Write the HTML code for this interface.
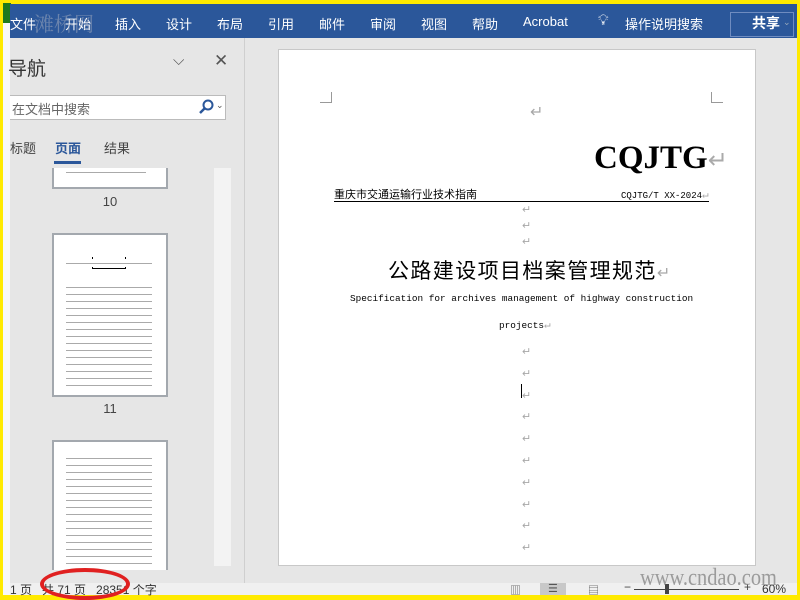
<!DOCTYPE html>
<html><head><meta charset="utf-8"><style>
*{margin:0;padding:0;box-sizing:border-box}
body{width:800px;height:600px;overflow:hidden;background:#ffea00;position:relative;font-family:"Liberation Sans","Noto Sans CJK SC",sans-serif}
.a{position:absolute}
.rib{left:10px;top:4px;width:787px;height:34px;background:#2b579a;color:#fff;font-size:13px}
.rib span{position:absolute;top:10px}
.nav{left:10px;top:38px;width:234px;height:545px;background:#e6e6e6}
.main{left:244px;top:38px;width:553px;height:545px;background:#e6e6e6;border-left:1px solid #cfcfcf}
.page{left:278px;top:49px;width:478px;height:517px;background:#fff;border:1px solid #c8c8c8}
.ret{color:#a8a8a8;font-size:11px}
.thumb{background:#fff;border:2px solid #a3a8ae;left:52px;width:116px}
.lines{position:absolute;left:12px;right:14px;background:repeating-linear-gradient(#fff 0 4px,#aaa 4px 5px,#fff 5px 7px)}
.num{font-size:13px;color:#444;width:116px;text-align:center;left:52px}
.status{left:10px;top:583px;width:787px;height:12px;background:#f0f0f0;font-size:12px;color:#333}
</style></head><body>
<div class="a" style="left:3px;top:3px;width:7px;height:592px;background:#f8f8f8"></div>
<div class="a" style="left:3px;top:3px;width:8px;height:20px;background:#1e7a1e"></div>
<div class="a rib">
<span style="left:0">文件</span><span style="left:55px">开始</span><span style="left:105px">插入</span><span style="left:156px">设计</span><span style="left:207px">布局</span><span style="left:258px">引用</span><span style="left:309px">邮件</span><span style="left:360px">审阅</span><span style="left:411px">视图</span><span style="left:462px">帮助</span><span style="left:513px">Acrobat</span>
<span style="left:588px;top:8px;font-size:15px">💡︎</span><span style="left:615px">操作说明搜索</span>
<div class="a" style="left:720px;top:8px;width:64px;height:25px;border:1px solid #6f8cc0"></div>
<span style="left:742px;font-weight:bold;font-size:14px;top:9px">共享</span><span style="left:773px;font-size:9px;top:13px;color:#9ab">⌄</span>
<span style="left:24px;top:4px;font-size:20px;color:rgba(160,170,190,.55);font-family:'Noto Serif CJK SC',serif">滩桥网</span>
</div>
<div class="a nav">
<div class="a" style="left:-2px;top:16px;font-size:19px;color:#333">导航</div>
<div class="a" style="left:163px;top:14px;font-size:15px;color:#555">⌵</div>
<div class="a" style="left:204px;top:13px;font-size:17px;color:#555">✕</div>
<div class="a" style="left:0;top:57px;width:216px;height:25px;background:#fff;border:1px solid #bbb;border-left:none"></div>
<div class="a" style="left:2px;top:61px;font-size:13px;color:#666">在文档中搜索</div>
<svg class="a" style="left:188px;top:61px" width="16" height="16"><circle cx="10" cy="6" r="4.5" fill="none" stroke="#2b579a" stroke-width="2"/><line x1="7" y1="9" x2="2" y2="14" stroke="#2b579a" stroke-width="2.5"/></svg>
<div class="a" style="left:206px;top:62px;font-size:9px;color:#555">⌄</div>
<div class="a" style="left:0;top:100px;font-size:13px;color:#444">标题</div>
<div class="a" style="left:45px;top:100px;font-size:13px;color:#2b579a;font-weight:bold">页面</div>
<div class="a" style="left:44px;top:123px;width:27px;height:3px;background:#2b579a"></div>
<div class="a" style="left:94px;top:100px;font-size:13px;color:#444">结果</div>
<div class="a" style="left:204px;top:130px;width:17px;height:398px;background:#f3f3f3"></div>
</div>
<div class="a thumb" style="top:168px;height:21px;border-top:none"><div class="lines" style="top:0;height:8px;right:20px"></div></div>
<div class="a num" style="top:194px">10</div>
<div class="a thumb" style="top:233px;height:164px">
<div class="a" style="left:38px;top:22px;width:34px;height:12px;border:1px solid #000;border-top:none"></div>
<div class="a" style="left:38px;top:28px;width:34px;height:1px;background:#000"></div>
<div class="lines" style="top:24px;height:8px"></div>
<div class="lines" style="top:48px;height:104px"></div></div>
<div class="a num" style="top:401px">11</div>
<div class="a thumb" style="top:440px;height:130px;border-bottom:none"><div class="lines" style="top:12px;height:112px"></div></div>
<div class="a main"></div>
<div class="a page"></div>
<div class="a" style="left:320px;top:92px;width:12px;height:11px;border-right:1px solid #999;border-bottom:1px solid #999"></div>
<div class="a" style="left:711px;top:92px;width:12px;height:11px;border-left:1px solid #999;border-bottom:1px solid #999"></div>
<div class="a ret" style="left:530px;top:102px;font-size:16px">↵</div>
<div class="a" style="left:594px;top:140px;font-family:'Liberation Serif',serif;font-weight:bold;font-size:33px;color:#000">CQJTG<span style="color:#aaa;font-weight:normal;font-size:24px">↵</span></div>
<div class="a" style="left:334px;top:186px;font-size:11px;color:#000">重庆市交通运输行业技术指南</div>
<div class="a" style="left:621px;top:188px;font-size:9px;font-family:'Liberation Mono',monospace;color:#000">CQJTG/T XX-2024<span class="ret">↵</span></div>
<div class="a" style="left:334px;top:201px;width:375px;height:1px;background:#000"></div>
<div class="a ret" style="left:522px;top:203px">↵</div>
<div class="a ret" style="left:522px;top:219px">↵</div>
<div class="a ret" style="left:522px;top:235px">↵</div>
<div class="a" style="left:388px;top:255px;font-size:21px;letter-spacing:1.4px;color:#000">公路建设项目档案管理规范<span class="ret" style="font-size:16px">↵</span></div>
<div class="a" style="left:350px;top:293px;font-size:9.4px;font-family:'Liberation Mono',monospace;color:#000">Specification for archives management of highway construction</div>
<div class="a" style="left:499px;top:318px;font-size:9.4px;font-family:'Liberation Mono',monospace;color:#000">projects<span class="ret">↵</span></div>
<div class="a ret" style="left:522px;top:342px;line-height:21.8px">↵<br>↵<br>↵<br>↵<br>↵<br>↵<br>↵<br>↵<br>↵<br>↵</div>
<div class="a" style="left:521px;top:384px;width:1px;height:14px;background:#000"></div>
<div class="a status">
<div class="a" style="left:0;top:-2px">1 页 &nbsp; 共 71 页 &nbsp; 28351 个字</div>
<div class="a" style="left:530px;top:0;width:26px;height:12px;background:#c8c8c8"></div>
<div class="a" style="left:500px;top:-1px;font-size:11px;color:#555">▥</div>
<div class="a" style="left:538px;top:-1px;font-size:11px;color:#555">☰</div>
<div class="a" style="left:578px;top:-1px;font-size:11px;color:#555">▤</div>
<div class="a" style="left:614px;top:-3px;color:#444">−</div>
<div class="a" style="left:624px;top:6px;width:105px;height:1px;background:#444"></div>
<div class="a" style="left:655px;top:1px;width:4px;height:10px;background:#444"></div>
<div class="a" style="left:734px;top:-3px;color:#444">+</div>
<div class="a" style="left:752px;top:-1px">60%</div>
</div>
<div class="a" style="left:640px;top:565px;font-family:'Liberation Serif',serif;font-size:24px;color:rgba(130,130,130,.75);transform:scaleX(.85);transform-origin:left">www.cndao.com</div>
<div class="a" style="left:40px;top:568px;width:90px;height:32px;border:4px solid #e02020;border-radius:50%"></div>
</body></html>
